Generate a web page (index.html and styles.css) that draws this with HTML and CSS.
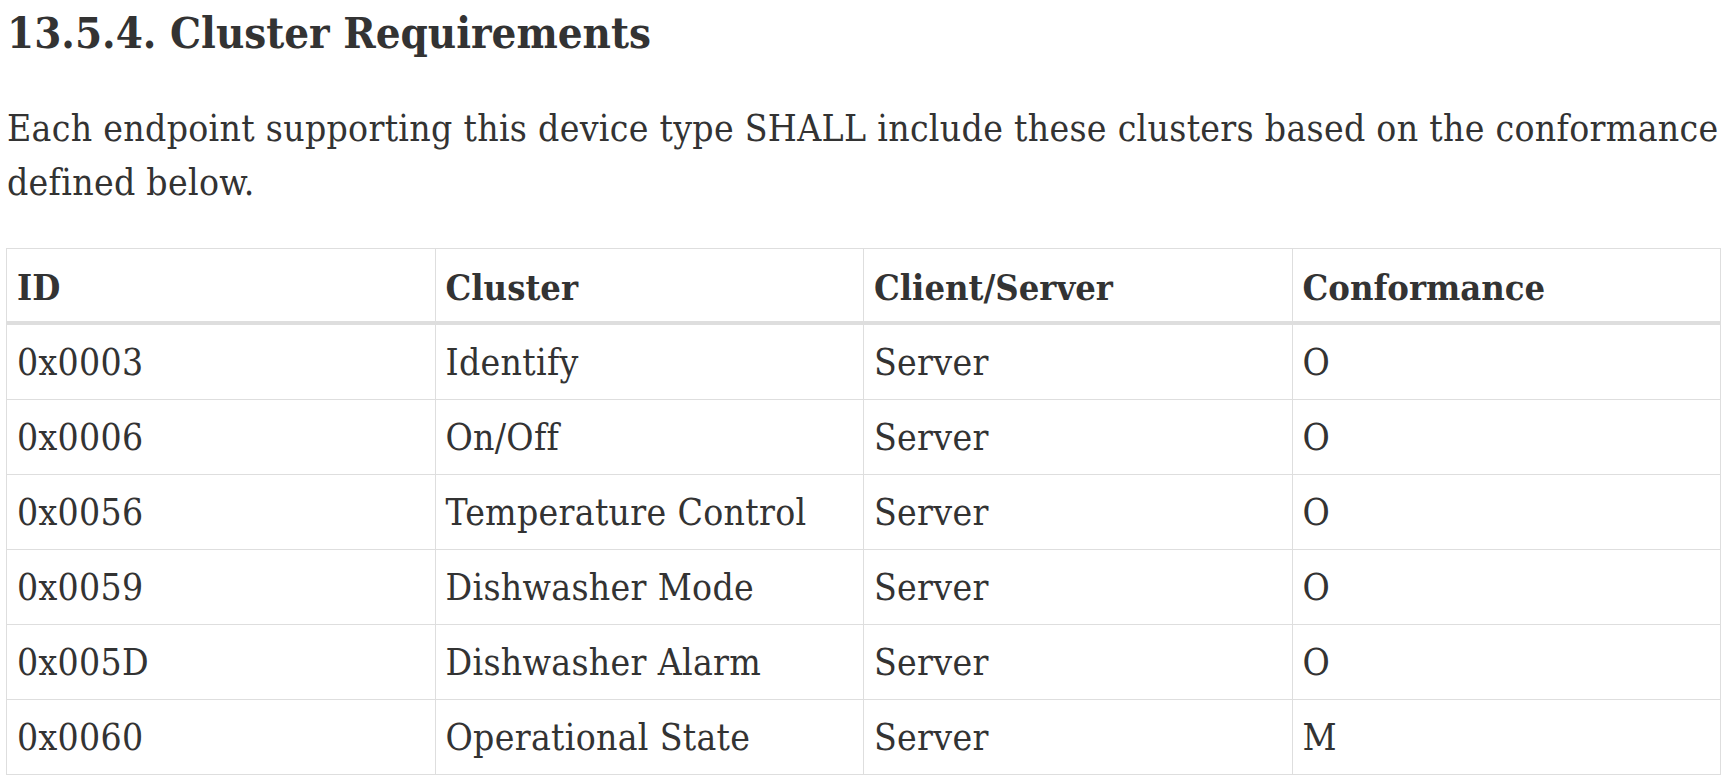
FILE: index.html
```html
<!DOCTYPE html>
<html lang="en">
<head>
<meta charset="utf-8">
<title>13.5.4. Cluster Requirements</title>
<link rel="stylesheet" href="styles.css">
</head>
<body>
<div class="content">
  <h4 class="section-title">13.5.4. Cluster Requirements</h4>
  <p class="para">Each endpoint supporting this device type SHALL include these clusters based on the conformance defined below.</p>
  <table class="spec-table">
    <thead>
      <tr>
        <th>ID</th>
        <th>Cluster</th>
        <th>Client/Server</th>
        <th>Conformance</th>
      </tr>
    </thead>
    <tbody>
      <tr><td>0x0003</td><td>Identify</td><td>Server</td><td>O</td></tr>
      <tr><td>0x0006</td><td>On/Off</td><td>Server</td><td>O</td></tr>
      <tr><td>0x0056</td><td>Temperature Control</td><td>Server</td><td>O</td></tr>
      <tr><td>0x0059</td><td>Dishwasher Mode</td><td>Server</td><td>O</td></tr>
      <tr><td>0x005D</td><td>Dishwasher Alarm</td><td>Server</td><td>O</td></tr>
      <tr><td>0x0060</td><td>Operational State</td><td>Server</td><td>M</td></tr>
    </tbody>
  </table>
</div>
</body>
</html>
```

FILE: styles.css
```css
html, body {
  margin: 0;
  padding: 0;
  background: #ffffff;
}

.content {
  padding: 0 5px 0 6px;
  font-family: "DejaVu Serif", "Liberation Serif", serif;
  font-stretch: condensed;
  color: #333333;
}

.section-title {
  margin: 7px 0 0 1px;
  font-size: 43.4px;
  line-height: 1.2;
  font-weight: bold;
  color: #333333;
}

.para {
  margin: 43px 0 0 1px;
  font-size: 37px;
  letter-spacing: 0.3px;
  line-height: 54px;
}

.spec-table {
  margin-top: 38px;
  width: 100%;
  border-collapse: collapse;
  table-layout: fixed;
  font-size: 37px;
  letter-spacing: 0.3px;
  line-height: 52px;
}

.spec-table th,
.spec-table td {
  border: 1px solid #dedede;
  text-align: left;
  vertical-align: top;
  padding: 12px 10px 10px 10px;
}

.spec-table th {
  font-size: 36px;
  letter-spacing: 0;
  font-weight: bold;
  padding-bottom: 8px;
  border-bottom: 4px solid #dedede;
}
```
